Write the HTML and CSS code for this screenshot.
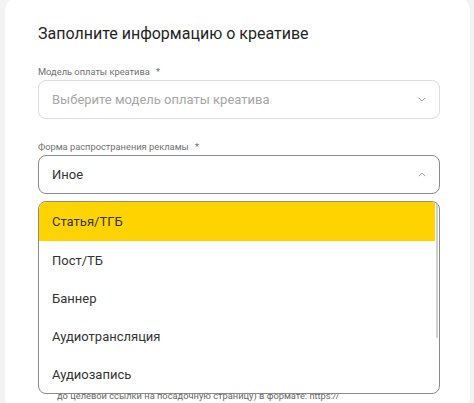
FILE: index.html
```html
<!DOCTYPE html>
<html lang="ru">
<head>
<meta charset="utf-8">
<link rel="stylesheet" href="styles.css">
</head>
<body>
<div class="card">
  <h1 class="title">Заполните информацию о креативе</h1>

  <div class="field">
    <div class="label">Модель оплаты креатива <span class="req">*</span></div>
    <div class="select">
      <span class="placeholder">Выберите модель оплаты креатива</span>
      <svg class="chev" width="8" height="5" viewBox="0 0 8 5"><path d="M0.8 0.8l3.2 3.2 3.2-3.2" fill="none" stroke="#a0a0a0" stroke-width="1"/></svg>
    </div>
  </div>

  <div class="field field-open">
    <div class="label">Форма распространения рекламы <span class="req">*</span></div>
    <div class="select select-active">
      <span class="value">Иное</span>
      <svg class="chev" width="8" height="5" viewBox="0 0 8 5"><path d="M0.8 4.2l3.2-3.2 3.2 3.2" fill="none" stroke="#a0a0a0" stroke-width="1"/></svg>
    </div>
    <ul class="menu">
      <li class="option option-active">Статья/ТГБ</li>
      <li class="option">Пост/ТБ</li>
      <li class="option">Баннер</li>
      <li class="option">Аудиотрансляция</li>
      <li class="option">Аудиозапись</li>
      <li class="scroll"><span class="thumb"></span></li>
    </ul>
  </div>

  <div class="hint">до целевой ссылки на посадочную страницу) в формате: https://</div>
</div>
</body>
</html>
```

FILE: styles.css
```css
html, body {
  margin: 0;
  padding: 0;
  background: #f3f3f3;
  overflow: hidden;
  height: 403px;
}
body {
  font-family: Roboto, "Noto Sans", sans-serif;
  color: #333;
}
.card {
  margin: -6px 0 0 5px;
  width: 465px;
  height: 420px;
  background: #fff;
  border-radius: 18px;
  box-sizing: border-box;
  padding: 28px 30px 0 33px;
}
.title {
  margin: 0 0 19px;
  font-size: 16px;
  font-weight: 400;
  line-height: 24px;
  color: #1f1f1f;
}
.field {
  margin-bottom: 21px;
}
.field-open {
  position: relative;
  margin-bottom: 0;
}
.label {
  font-size: 9.3px;
  line-height: 14px;
  color: #707070;
  margin-bottom: 1px;
}
.req {
  margin-left: 4px;
}
.select {
  height: 39px;
  box-sizing: border-box;
  border: 1px solid #dcdcdc;
  border-radius: 8px;
  display: flex;
  align-items: center;
  justify-content: space-between;
  padding: 0 13px 0 13px;
  font-size: 13px;
}
.select-active {
  border-color: #8a8a8a;
}
.placeholder {
  color: #a6a6a6;
}
.value {
  color: #333;
}
.chev {
  display: block;
}
.menu {
  position: absolute;
  left: 0;
  right: 0;
  top: 61px;
  margin: 0;
  padding: 0;
  list-style: none;
  background: #fff;
  border: 1px solid #8a8a8a;
  border-radius: 8px;
  overflow: hidden;
  z-index: 2;
  height: 193px;
  box-sizing: border-box;
}
.option {
  height: 38px;
  display: flex;
  align-items: center;
  padding-left: 13px;
  margin-right: 4px;
  font-size: 13px;
  color: #333;
}
.option-active {
  background: #fed400;
  height: 39px;
}
.scroll {
  position: absolute;
  top: 0;
  right: 1px;
  width: 2px;
  height: 136px;
}
.thumb {
  display: block;
  width: 2px;
  height: 100%;
  background: #d0d0d0;
  border-radius: 1px;
}
.hint {
  padding-left: 19px;
  font-size: 9.3px;
  line-height: 14px;
  color: #666;
  margin-top: 195px;
}
```
